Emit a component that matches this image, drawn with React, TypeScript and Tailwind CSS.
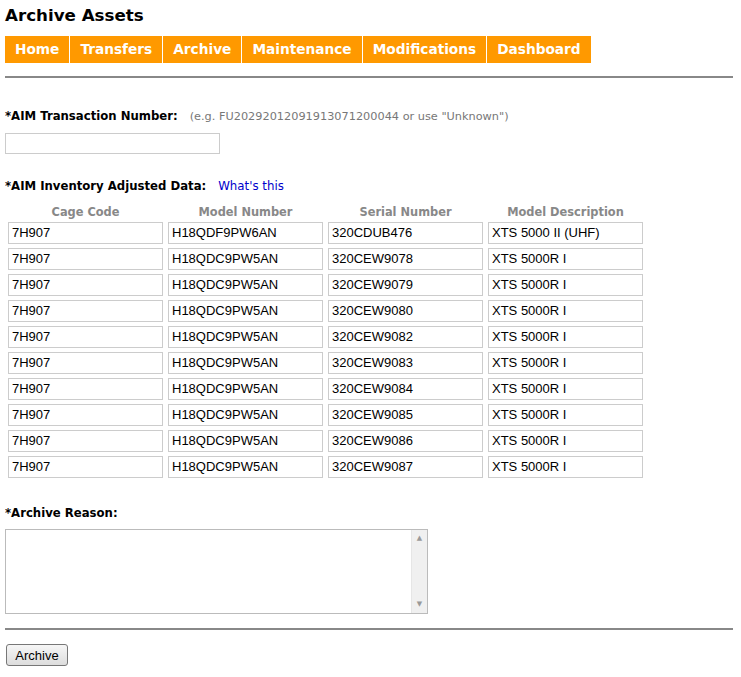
import React from 'react';

const navItems = ['Home', 'Transfers', 'Archive', 'Maintenance', 'Modifications', 'Dashboard'];

const rows = [
    ['7H907', 'H18QDF9PW6AN', '320CDUB476', 'XTS 5000 II (UHF)'],
    ['7H907', 'H18QDC9PW5AN', '320CEW9078', 'XTS 5000R I'],
    ['7H907', 'H18QDC9PW5AN', '320CEW9079', 'XTS 5000R I'],
    ['7H907', 'H18QDC9PW5AN', '320CEW9080', 'XTS 5000R I'],
    ['7H907', 'H18QDC9PW5AN', '320CEW9082', 'XTS 5000R I'],
    ['7H907', 'H18QDC9PW5AN', '320CEW9083', 'XTS 5000R I'],
    ['7H907', 'H18QDC9PW5AN', '320CEW9084', 'XTS 5000R I'],
    ['7H907', 'H18QDC9PW5AN', '320CEW9085', 'XTS 5000R I'],
    ['7H907', 'H18QDC9PW5AN', '320CEW9086', 'XTS 5000R I'],
    ['7H907', 'H18QDC9PW5AN', '320CEW9087', 'XTS 5000R I'],
];

const headers = ['Cage Code', 'Model Number', 'Serial Number', 'Model Description'];

const App: React.FC = () => {
    return (
        <div className="min-h-[677px] bg-white px-[5px] pt-[5px] font-['DejaVu_Sans',Verdana,sans-serif] text-black">
            <h1 className="text-[16.7px] font-bold leading-[20px]">Archive Assets</h1>

            {/* nav */}
            <div className="mt-[11px] flex gap-px">
                {navItems.map((item) => (
                    <div
                        key={item}
                        className="flex h-[27px] items-center bg-[#ff9900] px-[10px] text-[13.7px] font-bold text-white"
                    >
                        {item}
                    </div>
                ))}
            </div>

            <div className="mt-[13px] h-[2px] w-[728px] bg-[#888888]" />

            {/* transaction number */}
            <div className="mt-[30px] flex items-baseline gap-[12px]">
                <span className="text-[11.7px] font-bold">*AIM Transaction Number:</span>
                <span className="text-[11.3px] text-[#777777]">(e.g. FU20292012091913071200044 or use "Unknown")</span>
            </div>
            <input
                type="text"
                className="mt-[7px] block h-[21px] w-[215px] border border-[#cccccc] bg-white px-1 outline-none"
            />

            {/* inventory data */}
            <div className="mt-[24px] flex items-baseline gap-[12px]">
                <span className="text-[11.7px] font-bold">*AIM Inventory Adjusted Data:</span>
                <a className="text-[11.8px] text-[#0000cc]">What's this</a>
            </div>

            <div className="ml-[3px] mt-[9px] grid grid-cols-[155px_155px_155px_155px] gap-x-[5px] gap-y-[4px]">
                {headers.map((h) => (
                    <div key={h} className="-mb-[2px] text-center text-[11.4px] font-bold leading-[15px] text-[#888888]">
                        {h}
                    </div>
                ))}
                {rows.map((r, i) =>
                    r.map((v, j) => (
                        <input
                            key={`${i}-${j}`}
                            type="text"
                            defaultValue={v}
                            className="block h-[22px] w-[155px] border border-[#cccccc] bg-white px-[3px] font-['Liberation_Sans',Arial,sans-serif] text-[13px] text-black outline-none"
                        />
                    ))
                )}
            </div>

            {/* archive reason */}
            <div className="mt-[27px] text-[11.7px] font-bold">*Archive Reason:</div>
            <div className="mt-[7px] flex h-[85px] w-[423px] border border-[#bbbbbb] bg-white">
                <textarea className="h-full flex-1 resize-none bg-white outline-none" />
                <div className="flex w-[16px] flex-col items-center justify-between border-l border-[#e6e6e6] bg-[#f0f0f0] py-[5px] text-[7px] leading-none text-[#999999]">
                    <span>▲</span>
                    <span>▼</span>
                </div>
            </div>

            <div className="mt-[14px] h-[2px] w-[728px] bg-[#888888]" />

            <button className="ml-px mt-[14px] h-[22px] w-[62px] rounded-[3px] border border-[#777777] bg-gradient-to-b from-[#f6f6f6] to-[#dddddd] font-['Liberation_Sans',Arial,sans-serif] text-[13px] leading-none text-black">
                Archive
            </button>
        </div>
    );
};

export default App;
